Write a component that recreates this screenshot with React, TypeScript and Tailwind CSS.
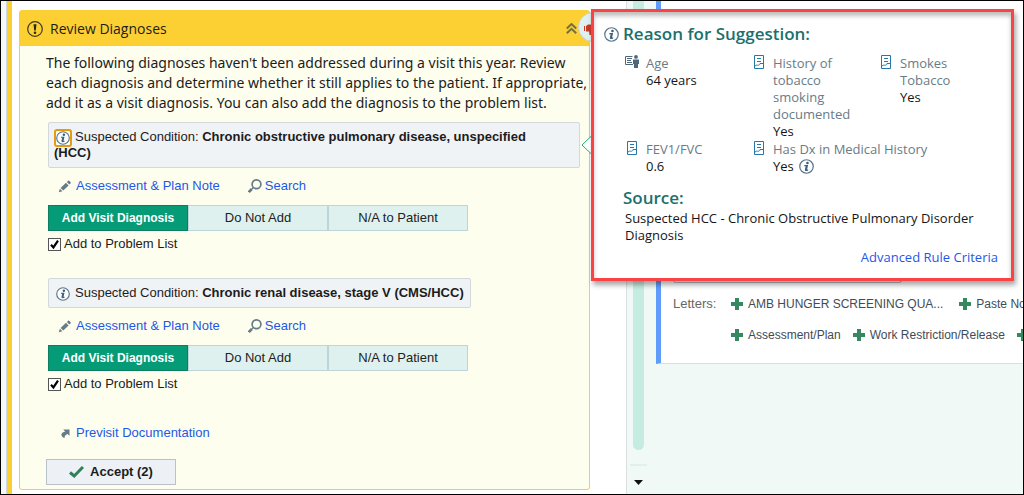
import { useId, useState, type ReactNode } from "react";

function InfoIcon({ className }: { className?: string }) {
  return (
    <svg viewBox="0 0 16 16" className={className} fill="none" aria-hidden="true">
      <circle cx="8" cy="8" r="7.2" stroke="#5a7488" strokeWidth="1.3" fill="#fbfdfe" />
      <circle cx="9" cy="4.2" r="1.4" fill="#3f5f7c" />
      <path d="M5.800 6.500h3.900L8.600 11.200h1.300l-.2 1c-1.200.8-3.900 1-3.400-1l.8-3.600H5.500z" fill="#3f5f7c" />
    </svg>
  );
}

function AlertIcon() {
  return (
    <svg viewBox="0 0 16 16" className="size-4 shrink-0" fill="none" aria-hidden="true">
      <circle cx="8" cy="8" r="7.3" stroke="#3d3a24" strokeWidth="1.2" />
      <path d="M6.500 3.200h3L8.800 9.600H7.200z" fill="#2d2a1c" />
      <circle cx="8" cy="11.800" r="1.300" fill="#2d2a1c" />
    </svg>
  );
}

function ChevronsUp() {
  return (
    <svg viewBox="0 0 11 11" className="size-[11px]" fill="none" stroke="#776f3c" strokeWidth="2" aria-hidden="true">
      <path d="M.8 5.500 5.500 1l4.700 4.500M.8 10.300 5.500 5.800l4.700 4.500" />
    </svg>
  );
}

function PencilIcon() {
  return (
    <svg viewBox="0 0 13 13" className="size-[13px] shrink-0" fill="#657b87" aria-hidden="true">
      <path d="M.8 12.200 1.900 8.700l2.500 2.500zM2.600 7.900 8 2.800l2.600 2.600-5.300 5.200zM8.800 2.100l1.200-1.200c.4-.4.9-.4 1.300 0l1.200 1.200c.4.4.4.9 0 1.300l-1.200 1.200z" />
    </svg>
  );
}

function SearchIcon() {
  return (
    <svg viewBox="0 0 14 14" className="size-[14px] shrink-0" fill="none" stroke="#657b87" aria-hidden="true">
      <circle cx="8.500" cy="5.300" r="4.400" strokeWidth="1.700" />
      <path d="M5.200 8.800 3.800 10" strokeWidth="1.500" />
      <path d="M3.800 10 .8 13" strokeWidth="2.600" />
    </svg>
  );
}

function JumpIcon() {
  return (
    <svg viewBox="0 0 9 9" className="size-[9px] shrink-0" fill="#657b87" aria-hidden="true">
      <path d="M2.200.5h6.300v6.300L6.500 4.900C4.400 5.700 3.500 6.800 3.500 9 1.500 8.300.2 6.900.4 5.400.6 3.900 2.500 3 4.200 2.500z" />
    </svg>
  );
}

function PlusIcon() {
  return (
    <svg viewBox="0 0 12 12" className="size-3 shrink-0" fill="#35885f" aria-hidden="true">
      <path d="M4 0h4v4h4v4H8v4H4V8H0V4h4z" />
    </svg>
  );
}

function NoteIcon() {
  return (
    <svg viewBox="0 0 10 14" className="mx-[2px] h-[14px] w-[10px]" fill="none" stroke="#2579a9" aria-hidden="true">
      <path d="M.5 13.500V.5h9v13zM.5 12.500c.3-2 1.200-2.500 3-2.300 1.600.2 2.200-.2 2.500-1.700h3.500" />
      <path d="M3 3.500h4M3 6.500h4" />
    </svg>
  );
}

function PersonIcon() {
  return (
    <svg viewBox="0 0 14 13" className="h-[13px] w-[14px]" aria-hidden="true">
      <path d="M7.500 1.500h-7v8h7.500M2 3.500h5M2 5.500h4M2 7.500h5" fill="none" stroke="#4c667c" />
      <circle cx="11" cy="1.900" r="1.900" fill="#4c667c" />
      <path d="M8 4.500h6v4.500h-1v4H9V9H8z" fill="#4c667c" />
    </svg>
  );
}

const choices = ["Add Visit Diagnosis", "Do Not Add", "N/A to Patient"];

function Condition({ name, highlighted = false }: { name: string; highlighted?: boolean }) {
  const [choice, setChoice] = useState(0);
  const [listed, setListed] = useState(true);
  const id = useId();
  return (
    <section className="mb-[26px] flex flex-col items-start">
      <div
        className={
          highlighted
            ? "rounded-[2px] border border-[#d3d8dd] bg-[#f0f3f6] py-[6px] pl-[5px] pr-8 leading-4"
            : "rounded-[2px] border border-[#d3d8dd] bg-[#f0f3f6] py-[6px] pl-[5px] pr-[6px] leading-4"
        }
      >
        <button
          type="button"
          aria-label="Reason for suggestion"
          className={
            highlighted
              ? "-my-1 mr-[3px] inline-block rounded-[3px] border-2 border-[#e39b10] bg-white align-middle"
              : "-my-1 mr-[3px] inline-block border-2 border-transparent align-middle"
          }
        >
          <InfoIcon className="size-[14px]" />
        </button>
        Suspected Condition: <strong>{name}</strong>
      </div>
      <div className="ml-[10px] mt-[10px] flex h-4 items-center gap-7 text-[#1f57e7]">
        <a href="#note" className="flex items-center gap-[5px]">
          <PencilIcon />
          Assessment &amp; Plan Note
        </a>
        <a href="#search" className="flex items-center gap-[3px]">
          <SearchIcon />
          Search
        </a>
      </div>
      <div className="mt-[11px] flex">
        {choices.map((label, i) => (
          <button
            key={label}
            type="button"
            aria-pressed={choice === i}
            onClick={() => setChoice(i)}
            className={
              choice === i
                ? "h-[26px] w-[140px] border border-[#0b7f60] bg-[#049b76] text-[12px] font-bold text-white"
                : "h-[26px] w-[140px] border border-[#bdd5d9] bg-[#dff1ee] text-[#222]"
            }
          >
            {label}
          </button>
        ))}
      </div>
      <div className="mt-[5px] flex h-4 items-center gap-[3px]">
        <span className="grid">
          <input
            id={id}
            type="checkbox"
            checked={listed}
            onChange={() => setListed(!listed)}
            className="peer col-start-1 row-start-1 size-[13px] appearance-none border border-[#555] bg-white"
          />
          <svg viewBox="0 0 13 13" className="pointer-events-none invisible col-start-1 row-start-1 size-[13px] peer-checked:visible" fill="none" stroke="#000" strokeWidth="2.200" aria-hidden="true">
            <path d="M3 6.800 5.400 9.400 10 2.600" />
          </svg>
        </span>
        <label htmlFor={id}>Add to Problem List</label>
      </div>
    </section>
  );
}

function Fact({ label, value, wide, person, info }: { label: string; value: string; wide?: boolean; person?: boolean; info?: boolean }) {
  return (
    <div className={wide ? "col-span-2 flex gap-[6px]" : "flex gap-[6px]"}>
      <span className="w-[15px] shrink-0">{person ? <PersonIcon /> : <NoteIcon />}</span>
      <div className={wide ? "" : "max-w-20"}>
        <dt className="text-[#6a7b86]">{label}</dt>
        <dd className="flex items-center gap-[5px]">
          {value}
          {info && <InfoIcon className="size-[15px]" />}
        </dd>
      </div>
    </div>
  );
}

function ReasonPopover() {
  return (
    <aside className="absolute left-full top-[-2px] ml-[2px] w-[423px] border-[3px] border-[#fb4245] bg-white pb-3 pl-[10px] pr-[13px] pt-[10px] font-['Open_Sans','Noto_Sans',sans-serif] text-[13px] leading-[17px] text-[#151515] shadow-[2px_4px_5px_rgba(0,0,0,0.35),inset_0_4px_4px_rgba(0,0,0,0.25)]">
      <h2 className="flex items-center gap-1 text-[17px] font-semibold leading-6 text-[#1b706d]">
        <InfoIcon className="size-[15px]" />
        Reason for Suggestion:
      </h2>
      <div className="pl-[19px]">
        <dl className="mt-[9px] grid grid-cols-[127px_127px_1fr] gap-y-px pl-[2px]">
          <Fact label="Age" value="64 years" person />
          <Fact label="History of tobacco smoking documented" value="Yes" />
          <Fact label="Smokes Tobacco" value="Yes" />
          <Fact label="FEV1/FVC" value="0.6" />
          <Fact label="Has Dx in Medical History" value="Yes" wide info />
        </dl>
        <h2 className="mt-[11px] text-[17px] font-semibold leading-6 text-[#1b706d]">Source:</h2>
        <p className="pl-[2px] font-medium">Suspected HCC - Chronic Obstructive Pulmonary Disorder Diagnosis</p>
        <p className="mt-[5px] text-right">
          <a href="#criteria" className="text-[#1f57e7]">Advanced Rule Criteria</a>
        </p>
      </div>
    </aside>
  );
}

function LetterLink({ children }: { children: ReactNode }) {
  return (
    <a href="#letter" className="flex shrink-0 items-center gap-[5px]">
      <PlusIcon />
      {children}
    </a>
  );
}

export default function App() {
  return (
    <div className="grid min-h-screen grid-cols-[625fr_397fr] overflow-hidden border border-black bg-white font-['Liberation_Sans',Arial,sans-serif] text-[13px] text-[#1c1c1c]">
      <main className="flex min-w-0">
        <div className="w-[6px] shrink-0 border-r border-[#cdd9e2] bg-[#f4f9f8]" />
        <div className="w-[5px] shrink-0 bg-[#fcce30]" />
        <div className="min-w-0 flex-1 pb-[3px] pl-[7px] pr-9 pt-[9px]">
          <div className="relative z-10 rounded-[3px] border border-[#fbce34] bg-[#fefeee]">
            <header className="flex h-[35px] items-center gap-[7px] bg-[#fcd032] pl-[7px] pr-3 font-['Open_Sans','Noto_Sans',sans-serif] text-[14px]">
              <AlertIcon />
              <h1 className="flex-1">Review Diagnoses</h1>
              <button type="button" aria-label="Collapse">
                <ChevronsUp />
              </button>
            </header>
            <button
              type="button"
              aria-label="Dismiss suggestion"
              className="absolute -right-[19px] top-px flex size-[30px] items-center rounded-full border border-[#c9d5d8] bg-[#def0ef] pl-[5px] pt-2"
            >
              <svg viewBox="0 0 14 14" className="size-[14px]" fill="#c63a2b" aria-hidden="true">
                <path d="M0 2h1v5H0zM2 2l2-1.500h6c3 0 3 7 0 7H7.500L8 11H5.500L5 7.500H2z" />
              </svg>
            </button>
            <div className="pb-1 pl-[26px] pt-[7px]">
              <p className="font-['Noto_Sans','Open_Sans',sans-serif] text-[14px] leading-5">
                The following diagnoses haven't been addressed during a visit this year. Review each diagnosis and determine whether it still applies to the patient. If appropriate, add it as a visit diagnosis. You can also add the diagnosis to the problem list.
              </p>
              <div className="ml-[2px] mr-[9px] mt-[9px]">
                <Condition name="Chronic obstructive pulmonary disease, unspecified (HCC)" highlighted />
                <Condition name="Chronic renal disease, stage V (CMS/HCC)" />
              </div>
              <a href="#previsit" className="ml-[15px] mt-[33px] flex h-4 items-center gap-[6px] text-[#1f57e7]">
                <JumpIcon />
                Previsit Documentation
              </a>
              <button
                type="button"
                className="mt-[18px] flex h-[26px] w-[130px] items-center justify-center gap-[6px] border border-[#b9c1cb] bg-[#edf0f5] font-bold"
              >
                <svg viewBox="0 0 15 12" className="h-3 w-[15px]" fill="none" stroke="#31805a" strokeWidth="3" aria-hidden="true">
                  <path d="M1 6.500 5.200 10 14 1" />
                </svg>
                Accept (2)
              </button>
            </div>
            <svg viewBox="0 0 12 22" className="absolute right-[-4px] top-[123px] h-[22px] w-3" fill="#fff" stroke="#23a582" aria-hidden="true">
              <path d="M12 .5 1 11l11 10.500" />
            </svg>
            <ReasonPopover />
          </div>
        </div>
      </main>
      <div className="flex min-w-0 overflow-hidden border-l border-[#dcdfe0] bg-[#f0f9f6]">
        <div className="flex w-[29px] shrink-0 flex-col items-center pr-[6px]">
          <div className="w-[11px] flex-1 rounded-b-full bg-[#c6ebe0]" />
          <div className="mt-[14px] h-[2px] w-[17px] bg-[#e0f1ec]" />
          <svg viewBox="0 0 9 5" className="mb-[9px] mt-[14px] h-[5px] w-[9px]" aria-hidden="true">
            <path d="M0 0h9L4.500 5z" fill="#111" />
          </svg>
        </div>
        <div className="min-w-0 flex-1">
          <section className="border-b border-l-[5px] border-b-[#dcdfe0] border-l-[#5e9dfb] bg-white pb-5 pl-3 pt-[264px] text-[12px] text-[#3e4c57]">
            <div className="h-[18px] w-[229px] rounded-b-[3px] border border-t-0 border-[#b9c1cb]" />
            <div className="mt-[13px] flex">
              <h2 className="w-[58px] shrink-0 text-[13px] leading-4 text-[#666]">Letters:</h2>
              <div className="flex flex-col gap-[15px] whitespace-nowrap leading-4">
                <div className="flex gap-4">
                  <LetterLink>AMB HUNGER SCREENING QUA...</LetterLink>
                  <LetterLink>Paste No</LetterLink>
                </div>
                <div className="flex gap-3">
                  <LetterLink>Assessment/Plan</LetterLink>
                  <LetterLink>Work Restriction/Release</LetterLink>
                  <a href="#more" aria-label="Add another letter" className="flex shrink-0 items-center">
                    <PlusIcon />
                  </a>
                </div>
              </div>
            </div>
          </section>
        </div>
      </div>
    </div>
  );
}
